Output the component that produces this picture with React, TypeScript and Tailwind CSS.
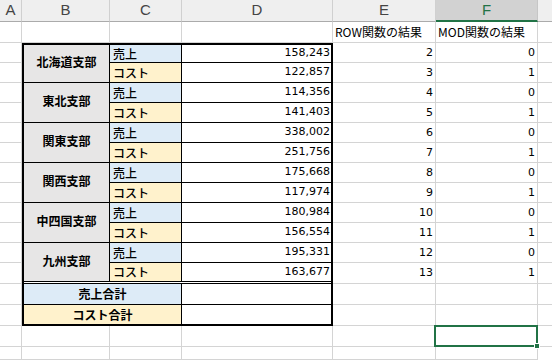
import React from "react";

const branches = [
  { name: "北海道支部", sales: "158,243", cost: "122,857" },
  { name: "東北支部", sales: "114,356", cost: "141,403" },
  { name: "関東支部", sales: "338,002", cost: "251,756" },
  { name: "関西支部", sales: "175,668", cost: "117,974" },
  { name: "中四国支部", sales: "180,984", cost: "156,554" },
  { name: "九州支部", sales: "195,331", cost: "163,677" },
];

const jp = "font-['Noto_Sans_CJK_JP','Noto_Sans',sans-serif]";
const num = "font-['DejaVu_Sans','Noto_Sans_CJK_JP',sans-serif] text-[11px]";
const grid = "border-r border-b border-[#d4d4d4] bg-white";

function Cell({ children, className = "" }: { children?: React.ReactNode; className?: string }) {
  return <div className={`${grid} ${className}`}>{children}</div>;
}

function NumCell({ value }: { value: number }) {
  return <Cell className={`${num} flex items-center justify-end pr-[2px] pt-[1px]`}>{value}</Cell>;
}

function Header({ label, active = false }: { label: string; active?: boolean }) {
  return (
    <div
      className={
        active
          ? "flex items-center justify-center bg-[#d2d2d2] border-r border-r-[#c6c6c6] border-b-2 border-b-[#217346] text-[#217346] text-[15px] font-['Liberation_Sans',sans-serif]"
          : "flex items-center justify-center bg-[#efefef] border-r border-r-[#d0d0d0] border-b border-b-[#ababab] text-[#444] text-[15px] font-['Liberation_Sans',sans-serif]"
      }
    >
      {label}
    </div>
  );
}

function BranchTable() {
  return (
    <div className="col-start-2 col-end-5 row-start-3 row-end-17 border-2 border-black flex flex-col bg-white text-black">
      {branches.map((b, i) => (
        <div
          key={b.name}
          className={i === 5 ? "flex border-b-[3px] border-double border-black" : "flex border-b border-black"}
        >
          <div className={`w-[86px] shrink-0 border-r border-black bg-[#e7e6e6] flex items-center justify-center pb-[3px] font-bold text-[12px] ${jp}`}>
            {b.name}
          </div>
          <div className="flex-1 flex flex-col">
            <div className={i === 0 ? "flex h-[18px] border-b border-black" : "flex h-[20px] border-b border-black"}>
              <div className={`w-[72px] shrink-0 border-r border-black bg-[#ddebf7] flex items-center pl-[3px] font-medium text-[12px] ${jp}`}>
                売上
              </div>
              <div className={`flex-1 flex items-center justify-end pr-[1px] ${num}`}>{b.sales}</div>
            </div>
            <div className={i === 5 ? "flex h-[18px]" : "flex h-[19px]"}>
              <div className={`w-[72px] shrink-0 border-r border-black bg-[#fff2cc] flex items-center pl-[3px] font-medium text-[12px] ${jp}`}>
                コスト
              </div>
              <div className={`flex-1 flex items-center justify-end pr-[1px] ${num}`}>{b.cost}</div>
            </div>
          </div>
        </div>
      ))}
      <div className="flex h-[21px] border-b border-black">
        <div className={`w-[158px] shrink-0 border-r border-black bg-[#ddebf7] flex items-center justify-center font-bold text-[12px] ${jp}`}>
          売上合計
        </div>
        <div className="flex-1" />
      </div>
      <div className="flex h-[19px]">
        <div className={`w-[158px] shrink-0 border-r border-black bg-[#fff2cc] flex items-center justify-center font-bold text-[12px] ${jp}`}>
          コスト合計
        </div>
        <div className="flex-1" />
      </div>
    </div>
  );
}

export default function App() {
  const rows = Array.from({ length: 14 }, (_, i) => i + 2);
  return (
    <div className="w-[552px] h-[360px] overflow-hidden bg-white grid grid-cols-[22px_88px_72px_151px_103px_102px_1fr] grid-rows-[22px_21px_repeat(11,20px)_21px_21px_21px_21px_1fr]">
      <Header label="A" />
      <Header label="B" />
      <Header label="C" />
      <Header label="D" />
      <Header label="E" />
      <Header label="F" active />
      <div className="bg-[#efefef] border-b border-b-[#ababab]" />

      <Cell />
      <Cell />
      <Cell />
      <Cell />
      <Cell className={`flex items-center pl-[2px] text-[12px] text-black ${jp}`}>ROW関数の結果</Cell>
      <Cell className={`flex items-center pl-[2px] text-[12px] text-black ${jp}`}>MOD関数の結果</Cell>
      <div className="border-b border-[#d4d4d4]" />

      <BranchTable />
      {rows.map((r) => (
        <React.Fragment key={r}>
          <Cell />
          {r <= 13 ? <NumCell value={r} /> : <Cell />}
          {r <= 13 ? <NumCell value={r % 2} /> : <Cell />}
          <div className="border-b border-[#d4d4d4]" />
        </React.Fragment>
      ))}

      <Cell />
      <Cell />
      <Cell />
      <Cell />
      <Cell />
      <Cell className="relative">
        <div className="absolute -left-[2px] -top-[1px] -right-[1px] -bottom-[1px] border-2 border-[#217346]" />
        <div className="absolute -right-[3px] -bottom-[3px] w-[6px] h-[6px] bg-[#217346] border border-white" />
      </Cell>
      <div className="border-b border-[#d4d4d4]" />

      <Cell />
      <Cell />
      <Cell />
      <Cell />
      <Cell />
      <Cell />
      <div />
    </div>
  );
}
